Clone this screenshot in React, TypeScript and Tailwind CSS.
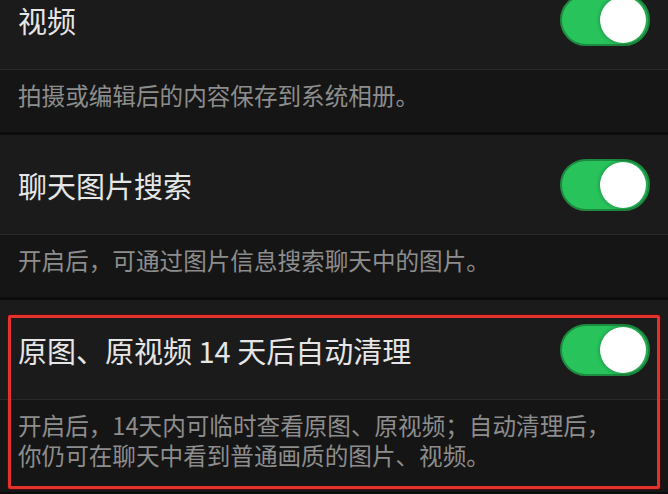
import React from "react";

const font = { fontFamily: '"Noto Sans CJK SC", "Noto Sans", sans-serif' };

function Toggle() {
  return (
    <div className="relative w-[90px] h-[52px] rounded-full bg-[#28c35b] border-2 border-[#1c8a3f] shrink-0">
      <div className="absolute right-[2px] top-[1px] w-[46px] h-[46px] rounded-full bg-white shadow-[0_0_4px_rgba(0,0,0,0.35)]" />
    </div>
  );
}

function Section({ title, desc, boxed }: { title: string; desc: React.ReactNode; boxed?: boolean }) {
  return (
    <div className="relative">
      <div className="h-[99px] bg-[#1b1b1b] flex items-center justify-between pl-[18px] pr-[18px]">
        <p className="text-[29px] text-[#e6e6e6] leading-[36px]">{title}</p>
        <Toggle />
      </div>
      <div className="border-t border-[#2a2a2a] bg-[#151515] pl-[18px] pr-[40px] pt-[10px] pb-[22px]">
        <p className="text-[23.6px] leading-[30px] text-[#8d8d8d]">{desc}</p>
      </div>
      {boxed && (
        <div className="absolute left-[8px] right-[8px] top-[15px] h-[174px] border-[3px] border-[#e3312b] rounded-[2px] shadow-[0_0_0_1px_rgba(90,10,10,0.6)] pointer-events-none" />
      )}
    </div>
  );
}

export default function App() {
  return (
    <div className="w-[668px] h-[494px] overflow-hidden bg-[#0c0c0c]" style={font}>
      <div className="-mt-[30px] flex flex-col gap-[3px]">
        <Section title="视频" desc="拍摄或编辑后的内容保存到系统相册。" />
        <Section title="聊天图片搜索" desc="开启后，可通过图片信息搜索聊天中的图片。" />
        <Section
          title="原图、原视频 14 天后自动清理"
          desc="开启后，14天内可临时查看原图、原视频；自动清理后，你仍可在聊天中看到普通画质的图片、视频。"
          boxed
        />
      </div>
    </div>
  );
}
